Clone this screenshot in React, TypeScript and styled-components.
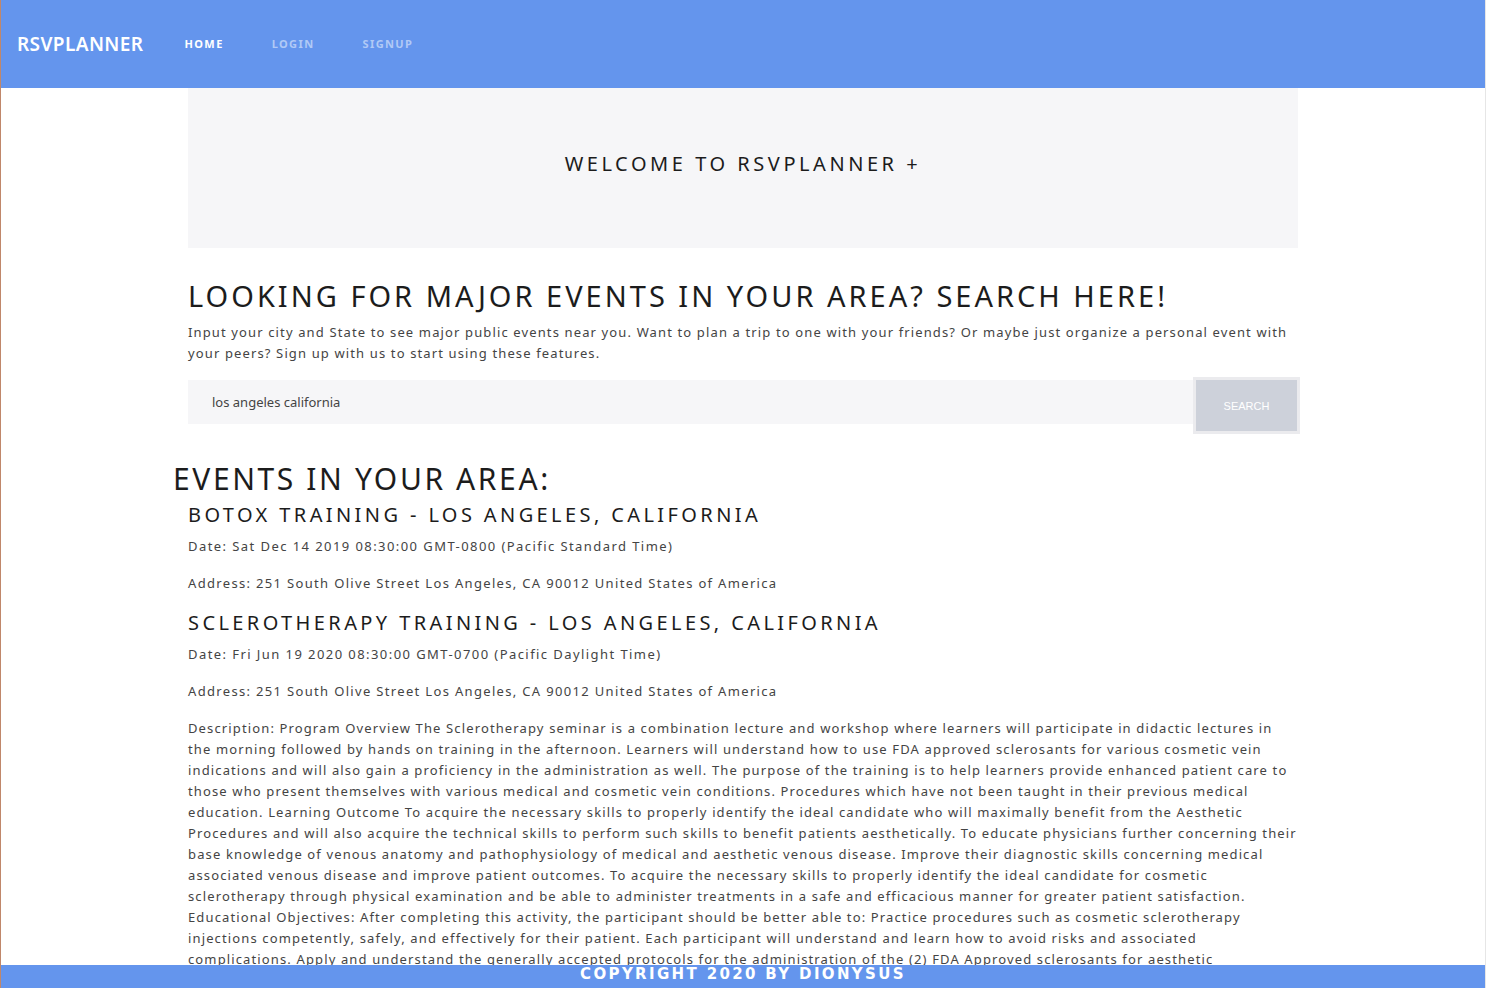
import React from "react";
import styled, { createGlobalStyle } from "styled-components";

const Global = createGlobalStyle`
  html { scrollbar-width: none; }
  html::-webkit-scrollbar { display: none; }
  body {
    margin: 0;
    font-family: "Noto Sans", "Open Sans", sans-serif;
    background: #fff;
    color: #222;
    border-left: 1px solid #c0876a;
    border-right: 1px solid #e6e6e6;
  }
  * { box-sizing: border-box; }
`;

const Nav = styled.nav`
  height: 88px;
  background: #6495ed;
  display: flex;
  align-items: center;
  padding: 0 16px 1px;
`;

const Brand = styled.a`
  font-family: "Noto Sans", sans-serif;
  font-size: 19px;
  font-weight: 600;
  color: #fff;
  letter-spacing: 0.4px;
  margin-right: 41px;
`;

const NavLink = styled.a<{ $active?: boolean }>`
  font-family: "Noto Sans", sans-serif;
  font-size: 11px;
  font-weight: 700;
  letter-spacing: 1.4px;
  color: ${(p) => (p.$active ? "#fff" : "rgba(255,255,255,0.5)")};
  margin-right: 48px;
`;

const Container = styled.main`
  max-width: 1140px;
  padding: 0 15px 60px;
  margin: 0 auto;
`;

const Hero = styled.section`
  background: #f6f6f8;
  height: 160px;
  display: flex;
  align-items: center;
  justify-content: center;
`;

const HeroTitle = styled.h1`
  margin: 0 0 10px;
  font-size: 20px;
  font-weight: 400;
  letter-spacing: 3.55px;
  color: #1c1c1c;
`;

const SearchTitle = styled.h2`
  margin: 30px 0 8px;
  font-size: 29px;
  font-weight: 400;
  letter-spacing: 3px;
  color: #1c1c1c;
  line-height: 36px;
`;

const Text = styled.p<{ $spacing?: number }>`
  margin: 0 0 16px;
  font-size: 13px;
  line-height: 21px;
  letter-spacing: ${(p) => p.$spacing ?? 1.13}px;
  color: #444;
`;

const SearchRow = styled.form`
  display: flex;
  align-items: flex-start;
  margin-top: 3px;
`;

const Input = styled.input`
  flex: 1;
  height: 44px;
  border: none;
  background: #f6f6f8;
  padding: 0 24px;
  font-family: "Noto Sans", sans-serif;
  font-size: 13px;
  color: #444;
  outline: none;
`;

const Button = styled.button`
  width: 107px;
  height: 57px;
  margin-top: -3px;
  margin-right: -2px;
  background: #cdd1da;
  border: 3px solid #ebebee;
  color: #fff;
  font-family: "Liberation Sans", Arial, sans-serif;
  font-size: 11px;
`;

const Row = styled.div`
  margin: 0 -15px;
`;

const EventsTitle = styled.h2`
  margin: 27px 0 5px;
  font-size: 30px;
  font-weight: 400;
  letter-spacing: 2.6px;
  color: #1c1c1c;
  line-height: 36px;
`;

const EventList = styled.div`
  padding: 0 15px;
`;

const EventTitle = styled.h3`
  margin: 3px 0 8px;
  font-size: 20px;
  font-weight: 400;
  letter-spacing: 3.4px;
  color: #1c1c1c;
  line-height: 26px;
`;

const Footer = styled.footer`
  position: fixed;
  left: 1px;
  right: 1px;
  bottom: 0;
  height: 23px;
  background: #6495ed;
  color: #fff;
  text-align: center;
  font-family: "DejaVu Sans", sans-serif;
  font-weight: 700;
  font-size: 15px;
  letter-spacing: 2.35px;
  line-height: 18px;
`;

const description =
  "Description: Program Overview The Sclerotherapy seminar is a combination lecture and workshop where learners will participate in didactic lectures in the morning followed by hands on training in the afternoon. Learners will understand how to use FDA approved sclerosants for various cosmetic vein indications and will also gain a proficiency in the administration as well. The purpose of the training is to help learners provide enhanced patient care to those who present themselves with various medical and cosmetic vein conditions. Procedures which have not been taught in their previous medical education. Learning Outcome To acquire the necessary skills to properly identify the ideal candidate who will maximally benefit from the Aesthetic Procedures and will also acquire the technical skills to perform such skills to benefit patients aesthetically. To educate physicians further concerning their base knowledge of venous anatomy and pathophysiology of medical and aesthetic venous disease. Improve their diagnostic skills concerning medical associated venous disease and improve patient outcomes. To acquire the necessary skills to properly identify the ideal candidate for cosmetic sclerotherapy through physical examination and be able to administer treatments in a safe and efficacious manner for greater patient satisfaction. Educational Objectives: After completing this activity, the participant should be better able to: Practice procedures such as cosmetic sclerotherapy injections competently, safely, and effectively for their patient. Each participant will understand and learn how to avoid risks and associated complications. Apply and understand the generally accepted protocols for the administration of the (2) FDA Approved sclerosants for aesthetic rejuvenation of spider veins and reticular veins.";

const events = [
  {
    title: "BOTOX TRAINING - LOS ANGELES, CALIFORNIA",
    date: "Date: Sat Dec 14 2019 08:30:00 GMT-0800 (Pacific Standard Time)",
    address: "Address: 251 South Olive Street Los Angeles, CA 90012 United States of America",
  },
  {
    title: "SCLEROTHERAPY TRAINING - LOS ANGELES, CALIFORNIA",
    date: "Date: Fri Jun 19 2020 08:30:00 GMT-0700 (Pacific Daylight Time)",
    address: "Address: 251 South Olive Street Los Angeles, CA 90012 United States of America",
    description,
  },
];

export default function App() {
  return (
    <>
      <Global />
      <Nav>
        <Brand>RSVPLANNER</Brand>
        <NavLink $active>HOME</NavLink>
        <NavLink>LOGIN</NavLink>
        <NavLink>SIGNUP</NavLink>
      </Nav>
      <Container>
        <Hero>
          <HeroTitle>WELCOME TO RSVPLANNER +</HeroTitle>
        </Hero>
        <SearchTitle>LOOKING FOR MAJOR EVENTS IN YOUR AREA? SEARCH HERE!</SearchTitle>
        <Text>
          Input your city and State to see major public events near you. Want to plan a trip to one
          with your friends? Or maybe just organize a personal event with your peers? Sign up with us
          to start using these features.
        </Text>
        <SearchRow onSubmit={(e) => e.preventDefault()}>
          <Input defaultValue="los angeles california" />
          <Button type="submit">SEARCH</Button>
        </SearchRow>
        <Row>
          <EventsTitle>EVENTS IN YOUR AREA:</EventsTitle>
          <EventList>
            {events.map((ev) => (
              <div key={ev.title}>
                <EventTitle>{ev.title}</EventTitle>
                <Text $spacing={1.43}>{ev.date}</Text>
                <Text $spacing={1.33}>{ev.address}</Text>
                {ev.description && <Text>{ev.description}</Text>}
              </div>
            ))}
          </EventList>
        </Row>
      </Container>
      <Footer>COPYRIGHT 2020 BY DIONYSUS</Footer>
    </>
  );
}
